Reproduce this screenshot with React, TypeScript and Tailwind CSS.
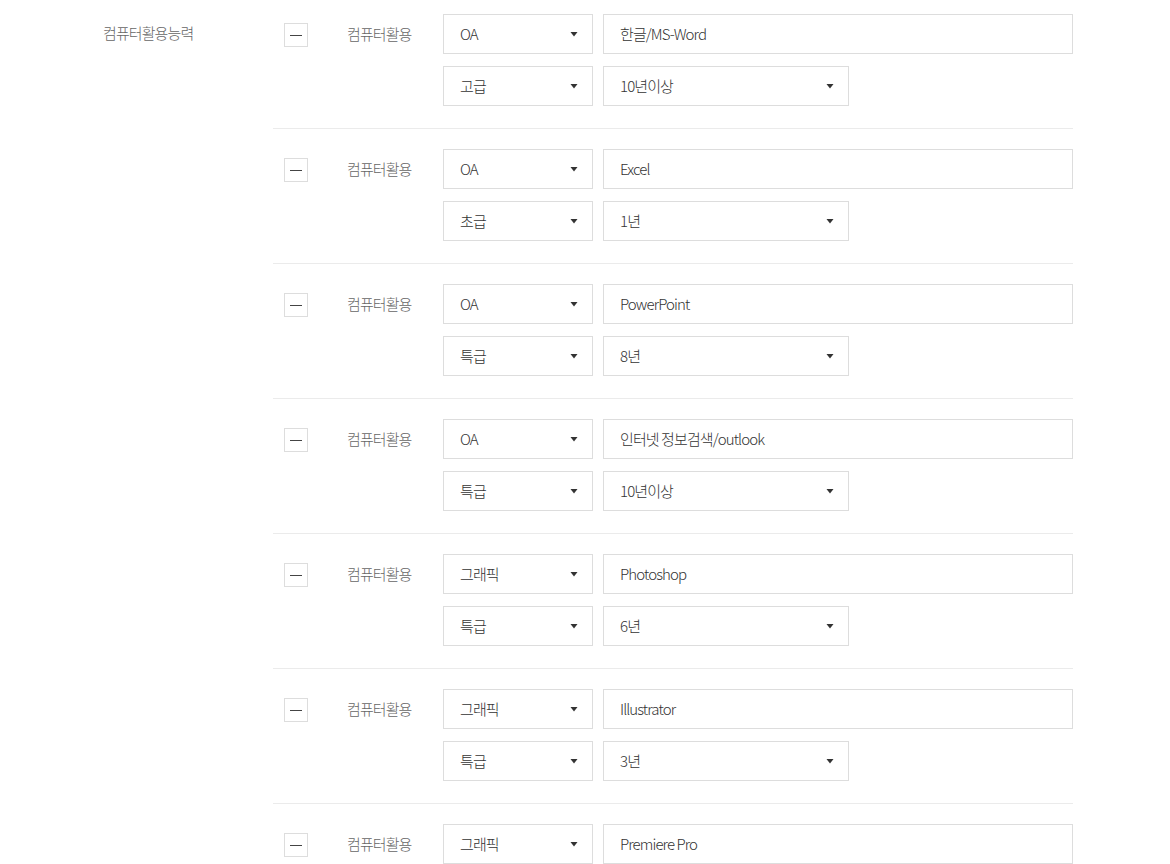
const font = { fontFamily: '"Noto Sans CJK KR", "Noto Sans", sans-serif' };

type Item = { category: string; name: string; level?: string; years?: string };

const items: Item[] = [
  { category: 'OA', name: '한글/MS-Word', level: '고급', years: '10년이상' },
  { category: 'OA', name: 'Excel', level: '초급', years: '1년' },
  { category: 'OA', name: 'PowerPoint', level: '특급', years: '8년' },
  { category: 'OA', name: '인터넷 정보검색/outlook', level: '특급', years: '10년이상' },
  { category: '그래픽', name: 'Photoshop', level: '특급', years: '6년' },
  { category: '그래픽', name: 'Illustrator', level: '특급', years: '3년' },
  { category: '그래픽', name: 'Premiere Pro' },
];

function Caret() {
  return (
    <svg width="8" height="5" viewBox="0 0 8 5" className="shrink-0">
      <path d="M0.5 0 H7.5 L4 4.5 Z" fill="#333" />
    </svg>
  );
}

function Select({ value, width }: { value: string; width: string }) {
  return (
    <div
      className={`${width} h-10 flex items-center justify-between pl-4 pr-[14px] border border-[#dddddd] bg-white text-[15px] font-light tracking-[-0.06em] text-[#333]`}
    >
      <span>{value}</span>
      <Caret />
    </div>
  );
}

function Block({ item, first }: { item: Item; first: boolean }) {
  return (
    <div className={`flex pl-[11px] pb-[22px] ${first ? 'pt-[14px]' : 'pt-5 border-t border-[#ebebeb]'}`}>
      <button className="w-6 h-6 mt-[9px] border border-[#dddddd] flex items-center justify-center shrink-0">
        <span className="block w-3 h-px bg-[#444]" />
      </button>
      <div className="w-[135px] pl-[39px] leading-10 text-[15px] font-light tracking-[-0.06em] text-[#666]">컴퓨터활용</div>
      <div className="flex flex-col gap-3">
        <div className="flex gap-[10px]">
          <Select value={item.category} width="w-[150px]" />
          <div className="w-[470px] h-10 flex items-center px-4 border border-[#dddddd] text-[15px] font-light tracking-[-0.06em] text-[#333]">
            {item.name}
          </div>
        </div>
        {item.level && item.years && (
          <div className="flex gap-[10px]">
            <Select value={item.level} width="w-[150px]" />
            <Select value={item.years} width="w-[246px]" />
          </div>
        )}
      </div>
    </div>
  );
}

export default function App() {
  return (
    <div className="bg-white min-h-screen" style={font}>
      <div className="flex pl-[103px]">
        <div className="w-[170px] pt-[21px] text-[15px] font-light tracking-[-0.06em] text-[#666] leading-6">컴퓨터활용능력</div>
        <div className="w-[800px]">
          {items.map((item, i) => (
            <Block key={i} item={item} first={i === 0} />
          ))}
        </div>
      </div>
    </div>
  );
}
